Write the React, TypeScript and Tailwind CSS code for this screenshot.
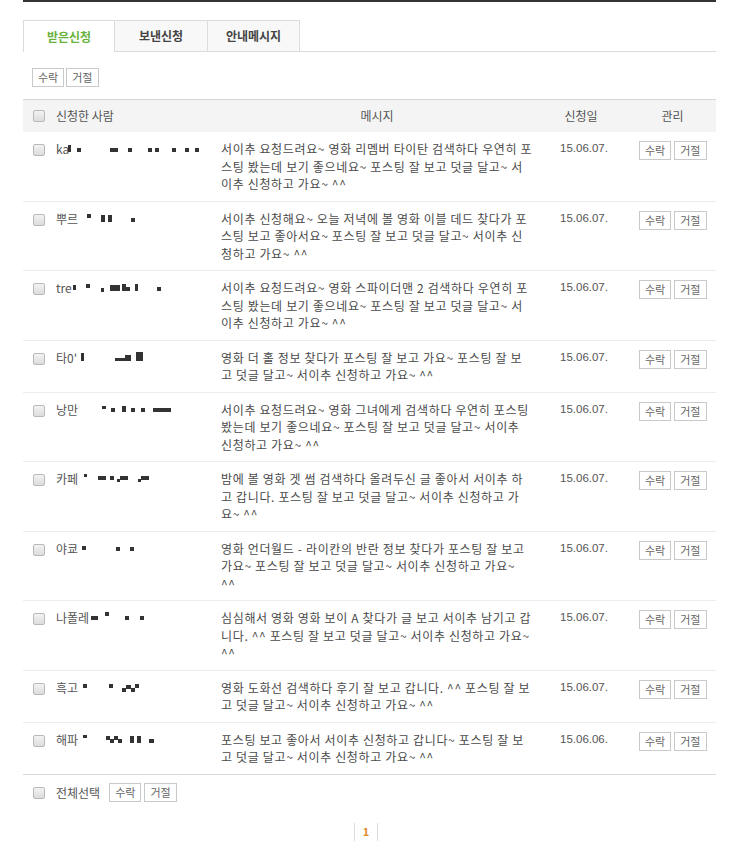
import React from 'react';

type Blob = [number, number, number, number]; // left, width, height, top offset

type Row = {
  name: string;
  blobs: Blob[];
  lines: string[];
  date: string;
};

const rows: Row[] = [
  {
    name: 'ka',
    blobs: [[12, 3, 7, 4], [21, 4, 4, 7], [54, 8, 4, 7], [72, 4, 4, 7], [92, 4, 4, 7], [99, 4, 4, 7], [116, 4, 4, 7], [129, 4, 4, 7], [139, 4, 4, 7]],
    lines: [
      '서이추 요청드려요~ 영화 리멤버 타이탄 검색하다 우연히 포',
      '스팅 봤는데 보기 좋으네요~ 포스팅 잘 보고 덧글 달고~ 서',
      '이추 신청하고 가요~ ^^',
    ],
    date: '15.06.07.',
  },
  {
    name: '뿌르',
    blobs: [[31, 4, 4, 3], [45, 4, 7, 4], [52, 4, 7, 4], [75, 4, 4, 7]],
    lines: [
      '서이추 신청해요~ 오늘 저녁에 볼 영화 이블 데드 찾다가 포',
      '스팅 보고 좋아서요~ 포스팅 잘 보고 덧글 달고~ 서이추 신',
      '청하고 가요~ ^^',
    ],
    date: '15.06.07.',
  },
  {
    name: 'tre',
    blobs: [[17, 3, 5, 5], [30, 4, 4, 4], [45, 3, 4, 8], [54, 10, 6, 5], [66, 4, 7, 4], [70, 4, 4, 7], [79, 3, 7, 4], [101, 4, 4, 7]],
    lines: [
      '서이추 요청드려요~ 영화 스파이더맨 2 검색하다 우연히 포',
      '스팅 봤는데 보기 좋으네요~ 포스팅 잘 보고 덧글 달고~ 서',
      '이추 신청하고 가요~ ^^',
    ],
    date: '15.06.07.',
  },
  {
    name: '타0\'',
    blobs: [[25, 3, 8, 3], [59, 10, 3, 8], [69, 6, 6, 5], [80, 7, 9, 2]],
    lines: [
      '영화 더 홀 정보 찾다가 포스팅 잘 보고 가요~ 포스팅 잘 보',
      '고 덧글 달고~ 서이추 신청하고 가요~ ^^',
    ],
    date: '15.06.07.',
  },
  {
    name: '낭만',
    blobs: [[46, 4, 3, 4], [55, 4, 4, 6], [66, 4, 6, 4], [75, 4, 4, 6], [85, 4, 4, 6], [97, 18, 4, 6]],
    lines: [
      '서이추 요청드려요~ 영화 그녀에게 검색하다 우연히 포스팅',
      '봤는데 보기 좋으네요~ 포스팅 잘 보고 덧글 달고~ 서이추',
      '신청하고 가요~ ^^',
    ],
    date: '15.06.07.',
  },
  {
    name: '카페',
    blobs: [[28, 3, 3, 3], [42, 8, 4, 5], [54, 4, 4, 5], [61, 3, 3, 8], [64, 8, 4, 5], [82, 3, 3, 8], [85, 8, 4, 5]],
    lines: [
      '밤에 볼 영화 겟 썸 검색하다 올려두신 글 좋아서 서이추 하',
      '고 갑니다. 포스팅 잘 보고 덧글 달고~ 서이추 신청하고 가',
      '요~ ^^',
    ],
    date: '15.06.07.',
  },
  {
    name: '야쿄',
    blobs: [[26, 4, 4, 5], [60, 4, 4, 6], [74, 4, 4, 6]],
    lines: [
      '영화 언더월드 - 라이칸의 반란 정보 찾다가 포스팅 잘 보고',
      '가요~ 포스팅 잘 보고 덧글 달고~ 서이추 신청하고 가요~',
      '^^',
    ],
    date: '15.06.07.',
  },
  {
    name: '나폴레',
    blobs: [[35, 7, 4, 6], [49, 4, 4, 2], [69, 4, 4, 6], [84, 4, 4, 6]],
    lines: [
      '심심해서 영화 영화 보이 A 찾다가 글 보고 서이추 남기고 갑',
      '니다. ^^ 포스팅 잘 보고 덧글 달고~ 서이추 신청하고 가요~',
      '^^',
    ],
    date: '15.06.07.',
  },
  {
    name: '흑고',
    blobs: [[27, 4, 4, 4], [53, 4, 4, 4], [66, 4, 4, 8], [70, 5, 4, 5], [75, 4, 4, 8], [79, 4, 4, 4]],
    lines: [
      '영화 도화선 검색하다 후기 잘 보고 갑니다. ^^ 포스팅 잘 보',
      '고 덧글 달고~ 서이추 신청하고 가요~ ^^',
    ],
    date: '15.06.07.',
  },
  {
    name: '해파',
    blobs: [[27, 4, 3, 3], [50, 4, 4, 4], [54, 4, 4, 7], [58, 4, 4, 4], [62, 4, 4, 7], [74, 4, 7, 4], [81, 4, 7, 4], [93, 5, 4, 7]],
    lines: [
      '포스팅 보고 좋아서 서이추 신청하고 갑니다~ 포스팅 잘 보',
      '고 덧글 달고~ 서이추 신청하고 가요~ ^^',
    ],
    date: '15.06.06.',
  },
];

function Check() {
  return (
    <span className="inline-block w-[12px] h-[12px] rounded-[2px] border border-[#b9b9b9] bg-gradient-to-b from-[#f3f3f3] to-[#dcdcdc] shrink-0" />
  );
}

function SmallButton({ label }: { label: string }) {
  return (
    <button className="h-[19px] px-[5px] border border-[#c9c9c9] bg-white text-[11px] leading-[17px] text-[#666] cursor-pointer">
      {label}
    </button>
  );
}

function Name({ name, blobs }: { name: string; blobs: Blob[] }) {
  return (
    <span className="relative inline-block h-[17.5px] w-[150px]">
      <span className="text-[12px] text-[#555]">{name}</span>
      {blobs.map((b, i) => (
        <span
          key={i}
          className="absolute bg-[#333]"
          style={{ left: b[0], width: b[1], height: b[2], top: b[3] + 1 }}
        />
      ))}
    </span>
  );
}

export default function App() {
  return (
    <div className="w-[743px] min-h-[865px] bg-white font-['Noto_Sans_CJK_KR','Liberation_Sans',sans-serif] text-[#555]">
      <div className="mx-[23px] w-[693px]">
        <div className="h-[2px] bg-[#333]" />

        {/* tabs */}
        <div className="mt-[18px] flex h-[32px]">
          <div className="w-[92px] border border-b-0 border-[#dcdcdc] bg-white flex items-center justify-center text-[12px] font-bold text-[#6ab23e]">
            받은신청
          </div>
          <div className="w-[93px] border-t border-r border-b border-[#dcdcdc] bg-[#f8f8f8] flex items-center justify-center text-[12px] font-bold text-[#444]">
            보낸신청
          </div>
          <div className="w-[92px] border-t border-r border-b border-[#dcdcdc] bg-[#f8f8f8] flex items-center justify-center text-[12px] font-bold text-[#444]">
            안내메시지
          </div>
          <div className="flex-1 border-b border-[#dcdcdc]" />
        </div>

        <div className="mt-[16px] pl-[9px] flex gap-[2px]">
          <SmallButton label="수락" />
          <SmallButton label="거절" />
        </div>

        {/* header */}
        <div className="mt-[12px] h-[33px] flex items-center bg-[#f4f4f4] border-t border-[#d6d6d6] text-[12px] text-[#555]">
          <div className="w-[33px] pl-[10px] flex">
            <Check />
          </div>
          <div className="w-[165px]">신청한 사람</div>
          <div className="w-[312px] text-center">메시지</div>
          <div className="w-[96px] text-center">신청일</div>
          <div className="flex-1 text-center">관리</div>
        </div>

        {/* rows */}
        <div className="border-b border-[#d9d9d9]">
          {rows.map((r, i) => (
            <div
              key={i}
              className={`flex py-[8px] text-[12px] leading-[17.5px] ${i < rows.length - 1 ? 'border-b border-[#ececec]' : ''}`}
            >
              <div className="w-[33px] pl-[10px] pt-[4px] flex">
                <Check />
              </div>
              <div className="w-[165px]">
                <Name name={r.name} blobs={r.blobs} />
              </div>
              <div className="w-[339px] text-[#4a4a4a] tracking-[0.65px]">
                {r.lines.map((l, j) => (
                  <div key={j} className="whitespace-nowrap">
                    {l}
                  </div>
                ))}
              </div>
              <div className="w-[79px] font-['Liberation_Sans',sans-serif] text-[11.5px] text-[#555]">{r.date}</div>
              <div className="flex-1 flex gap-[3px] mt-[1px] h-[19px]">
                <SmallButton label="수락" />
                <SmallButton label="거절" />
              </div>
            </div>
          ))}
        </div>

        {/* footer */}
        <div className="mt-[7px] flex items-center h-[22px] text-[12px] text-[#555]">
          <div className="w-[33px] pl-[10px] flex">
            <Check />
          </div>
          <span className="mr-[9px]">전체선택</span>
          <div className="flex gap-[3px]">
            <SmallButton label="수락" />
            <SmallButton label="거절" />
          </div>
        </div>

        {/* pagination */}
        <div className="mt-[19px] flex justify-center pr-[7px]">
          <div className="flex items-center h-[18px] border-l border-r border-[#dddddd] px-[8px] text-[11px] font-bold text-[#e08a2e]">
            1
          </div>
        </div>
      </div>
    </div>
  );
}
